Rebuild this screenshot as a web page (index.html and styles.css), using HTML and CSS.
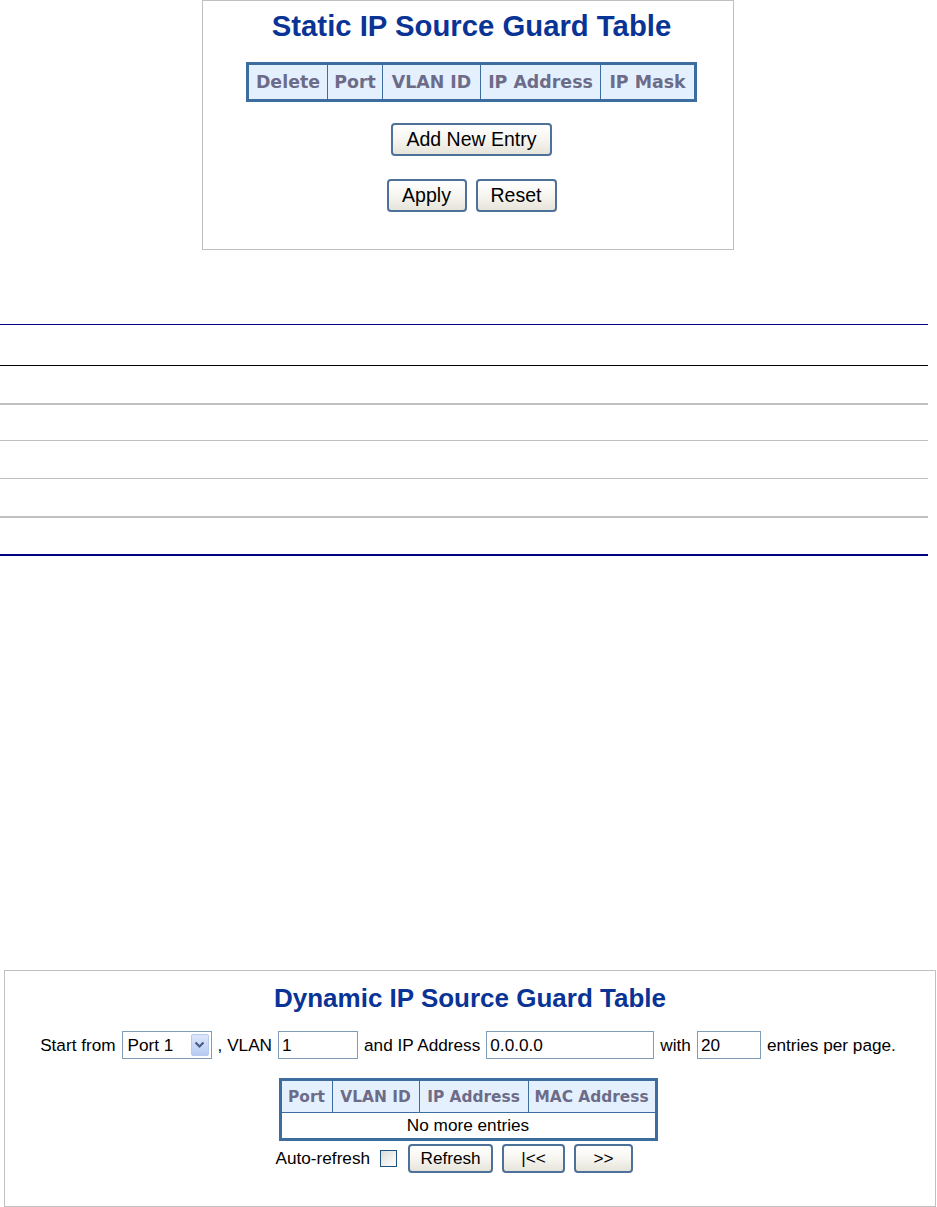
FILE: index.html
```html
<!DOCTYPE html>
<html>
<head>
<meta charset="utf-8">
<title>IP Source Guard</title>
<link rel="stylesheet" href="styles.css">
</head>
<body>
<div class="panel panel-static">
  <h1 class="title title-static">Static IP Source Guard Table</h1>
  <table class="grid grid-static">
    <tr>
      <th class="c-del">Delete</th>
      <th class="c-port">Port</th>
      <th class="c-vlan">VLAN ID</th>
      <th class="c-ip">IP Address</th>
      <th class="c-mask">IP Mask</th>
    </tr>
  </table>
  <div class="btn-row btn-row-add">
    <button class="btn btn-add">Add New Entry</button>
  </div>
  <div class="btn-row btn-row-apply">
    <button class="btn btn-apply">Apply</button>
    <button class="btn btn-reset">Reset</button>
  </div>
</div>

<div class="doc-table">
  <div class="doc-row doc-head"></div>
  <div class="doc-row doc-r1"></div>
  <div class="doc-row doc-r2"></div>
  <div class="doc-row doc-r3"></div>
  <div class="doc-row doc-r4"></div>
  <div class="doc-row doc-r5"></div>
</div>

<div class="panel panel-dynamic">
  <h1 class="title title-dynamic">Dynamic IP Source Guard Table</h1>
  <div class="controls">
    <span>Start from</span>
    <span class="select">
      <span class="select-text">Port 1</span>
      <span class="select-arrow">
        <svg width="11" height="8" viewBox="0 0 11 8"><path d="M1.5 1.5 L5.5 5.5 L9.5 1.5" fill="none" stroke="#4a5f88" stroke-width="2.2"/></svg>
      </span>
    </span>
    <span>, VLAN</span>
    <span class="input in-vlan">1</span>
    <span>and IP Address</span>
    <span class="input in-ip">0.0.0.0</span>
    <span>with</span>
    <span class="input in-num">20</span>
    <span>entries per page.</span>
  </div>
  <div class="dyn-wrap">
    <table class="grid grid-dynamic">
      <tr>
        <th class="d-port">Port</th>
        <th class="d-vlan">VLAN ID</th>
        <th class="d-ip">IP Address</th>
        <th class="d-mac">MAC Address</th>
      </tr>
      <tr>
        <td colspan="4" class="empty">No more entries</td>
      </tr>
    </table>
    <div class="refresh-row">
      <span>Auto-refresh</span>
      <span class="checkbox"></span>
      <button class="btn btn-small btn-refresh">Refresh</button>
      <button class="btn btn-small btn-first">|&lt;&lt;</button>
      <button class="btn btn-small btn-next">&gt;&gt;</button>
    </div>
  </div>
</div>
</body>
</html>
```

FILE: styles.css
```css
html, body {
  margin: 0;
  padding: 0;
  background: #ffffff;
}

body {
  font-family: "Liberation Sans", Arial, sans-serif;
  color: #000;
}

.panel {
  box-sizing: border-box;
  border: 1px solid #c0c0c0;
  display: flex;
  flex-direction: column;
  align-items: center;
}

.panel-static {
  margin-left: 202px;
  width: 532px;
  height: 250px;
  padding: 8px 0 0 7px;
}

.title {
  margin: 0;
  font-weight: bold;
  color: #0a3396;
  white-space: nowrap;
}

.title-static {
  font-size: 29.3px;
  line-height: 34px;
}

.grid {
  border-collapse: collapse;
  border: 3px solid #3d6c9f;
  table-layout: fixed;
}

.grid th {
  background: #e5f0ff;
  color: #6c6c88;
  font-family: "DejaVu Sans", Verdana, sans-serif;
  font-weight: bold;
  border: 1px solid #3d6c9f;
  padding: 0;
  text-align: center;
  white-space: nowrap;
}

.grid-static {
  margin-top: 19px;
  width: 450px;
}

.grid-static th {
  font-size: 17.4px;
  height: 34px;
}

.c-del { width: 78px; }
.c-port { width: 54px; }
.c-vlan { width: 97px; }
.c-ip { width: 119px; }
.c-mask { width: 93px; }

.btn-row {
  display: flex;
  justify-content: center;
  gap: 9px;
}

.btn {
  box-sizing: border-box;
  font-family: "Liberation Sans", Arial, sans-serif;
  color: #000;
  background: linear-gradient(#ffffff 0%, #f6f5f0 50%, #e6e4da 100%);
  border: 2px solid #4d7198;
  border-radius: 4px;
  padding: 0;
  margin: 0;
}

.btn-row-add {
  margin-top: 21px;
}

.btn-add {
  width: 161px;
  height: 33px;
  font-size: 19.5px;
}

.btn-row-apply {
  margin-top: 23px;
}

.btn-apply {
  width: 80px;
  height: 33px;
  font-size: 19.5px;
}

.btn-reset {
  width: 81px;
  height: 33px;
  font-size: 19.5px;
}

/* document style table in the middle */
.doc-table {
  width: 928px;
  margin-top: 74px;
  border-top: 1px solid #000080;
}

.doc-row {
  box-sizing: border-box;
}

.doc-head {
  height: 41px;
  border-bottom: 1px solid #000000;
}

.doc-r1 {
  height: 39px;
  border-bottom: 2px solid #c0c0c0;
}

.doc-r2 {
  height: 36px;
  border-bottom: 1px solid #c0c0c0;
}

.doc-r3 {
  height: 38px;
  border-bottom: 1px solid #c0c0c0;
}

.doc-r4 {
  height: 39px;
  border-bottom: 2px solid #c0c0c0;
}

.doc-r5 {
  height: 38px;
  border-bottom: 2px solid #000080;
}

/* dynamic panel */
.panel-dynamic {
  margin-top: 414px;
  margin-left: 4px;
  width: 932px;
  height: 237px;
  padding-top: 12px;
}

.title-dynamic {
  font-size: 26px;
  line-height: 30px;
}

.controls {
  margin-top: 18px;
  display: flex;
  align-items: center;
  gap: 6px;
  font-size: 17.2px;
  white-space: nowrap;
  margin-right: 4px;
}

.select {
  box-sizing: border-box;
  display: inline-flex;
  align-items: center;
  justify-content: space-between;
  width: 90px;
  height: 28px;
  border: 1px solid #7f9db9;
  padding: 0 2px 0 5px;
  background: #fff;
}

.select-arrow {
  box-sizing: border-box;
  width: 18px;
  height: 22px;
  display: flex;
  align-items: center;
  justify-content: center;
  background: linear-gradient(#dde7fb, #b8cbf3);
  border: 1px solid #b7c9ee;
  border-radius: 2px;
}

.input {
  box-sizing: border-box;
  display: inline-flex;
  align-items: center;
  height: 28px;
  border: 1px solid #7f9db9;
  padding-left: 3px;
  background: #fff;
}

.in-vlan { width: 80px; }
.in-ip { width: 168px; }
.in-num { width: 64px; }

.dyn-wrap {
  margin-top: 19px;
  display: flex;
  flex-direction: column;
  align-items: flex-start;
  margin-right: 4px;
}

.grid-dynamic {
  width: 377px;
}

.grid-dynamic th {
  font-size: 15.4px;
  height: 31px;
}

.d-port { width: 50px; }
.d-vlan { width: 86px; }
.d-ip { width: 108px; }
.d-mac { width: 126px; }

.grid-dynamic td.empty {
  border: 1px solid #3d6c9f;
  text-align: center;
  font-size: 17.2px;
  height: 25px;
  padding: 0;
  background: #fff;
}

.refresh-row {
  margin-top: 3px;
  margin-left: -3px;
  display: flex;
  align-items: center;
  font-size: 17.2px;
  white-space: nowrap;
}

.checkbox {
  box-sizing: border-box;
  width: 17px;
  height: 17px;
  margin-left: 10px;
  border: 1px solid #1c5180;
  background: linear-gradient(135deg, #dcdcd6, #ffffff);
}

.btn-small {
  height: 29px;
  font-size: 17.2px;
}

.btn-refresh {
  width: 85px;
  margin-left: 11px;
}

.btn-first {
  width: 63px;
  margin-left: 9px;
}

.btn-next {
  width: 59px;
  margin-left: 9px;
}
```
